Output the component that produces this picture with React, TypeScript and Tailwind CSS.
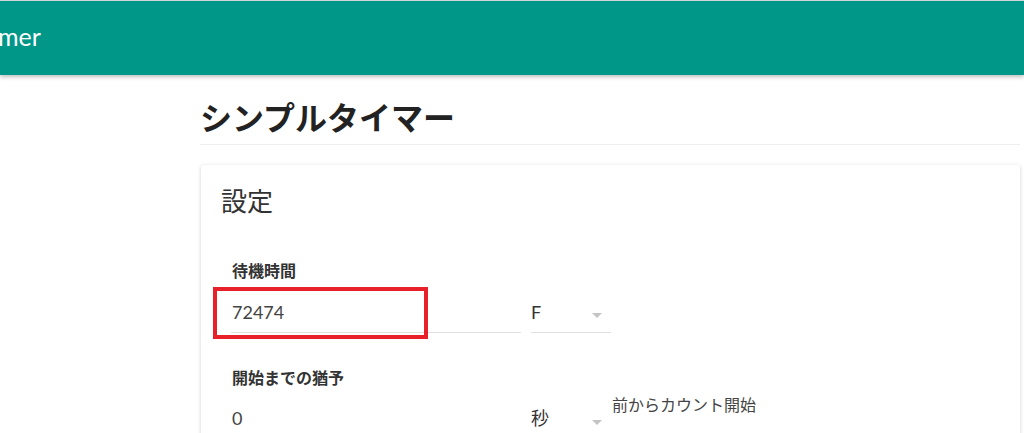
const FONT = "font-['Lato','Noto_Sans_CJK_JP',sans-serif]";

function Caret() {
  return (
    <svg width="10" height="5" viewBox="0 0 10 5" className="shrink-0">
      <path d="M0 0 L10 0 L5 5 Z" fill="#c4c4c4" />
    </svg>
  );
}

export default function App() {
  return (
    <div className={`min-h-screen bg-white ${FONT}`}>
      {/* App bar */}
      <header className="flex h-[75px] items-center border-t border-[#cfd4d4] bg-[#009688] shadow-[0_2px_4px_rgba(0,0,0,0.25)]">
        <span className="-ml-[2px] pb-[4px] text-[25px] leading-none text-white">mer</span>
      </header>

      <main className="ml-[200px] w-[820px]">
        <h1 className="mt-[24px] border-b border-[#eeeeee] pb-[7px] text-[32px] font-bold leading-[38px] text-[#222]">
          シンプルタイマー
        </h1>

        {/* Settings card */}
        <section className="ml-[1px] mt-[20px] rounded-[3px] bg-white pb-[40px] pt-[21px] shadow-[0_1px_4px_rgba(0,0,0,0.18)]">
          <h2 className="px-[20px] text-[26px] leading-[31px] text-[#333]">設定</h2>

          <div className="pl-[30px] pr-[30px]">
            <div className="mt-[43px]">
              <label className="block pl-[1px] text-[16px] font-bold leading-[22px] text-[#333]">待機時間</label>
              <div className="mt-[4px] flex items-end gap-[10px]">
                <div className="relative w-[290px] border-b border-[#e0e0e0] pb-[7px] pt-[13px]">
                  <span className="block pl-[1px] text-[18px] leading-[26px] text-[#444]">72474</span>
                  <div className="absolute left-[-18px] top-[1px] h-[52px] w-[215px] border-[4px] border-[#e8202a]" />
                </div>
                <div className="flex w-[80px] items-center justify-between border-b border-[#e0e0e0] pb-[7px] pr-[9px] pt-[13px]">
                  <span className="text-[18px] leading-[26px] text-[#333]">F</span>
                  <span className="mt-[7px]">
                    <Caret />
                  </span>
                </div>
              </div>
            </div>

            <div className="mt-[34px]">
              <label className="block pl-[1px] text-[16px] font-bold leading-[22px] text-[#333]">開始までの猶予</label>
              <div className="mt-[4px] flex items-start gap-[10px]">
                <div className="w-[290px] border-b border-[#e0e0e0] pb-[7px] pt-[12px]">
                  <span className="block pl-[1px] text-[18px] leading-[26px] text-[#444]">0</span>
                </div>
                <div className="flex w-[80px] items-center justify-between border-b border-[#e0e0e0] pb-[7px] pr-[9px] pt-[12px]">
                  <span className="text-[18px] leading-[26px] text-[#333]">秒</span>
                  <span className="mt-[9px]">
                    <Caret />
                  </span>
                </div>
                <span className="-ml-[10px] pl-[1px] text-[16px] leading-[24px] text-[#444]">前からカウント開始</span>
              </div>
            </div>
          </div>
        </section>
      </main>
    </div>
  );
}
